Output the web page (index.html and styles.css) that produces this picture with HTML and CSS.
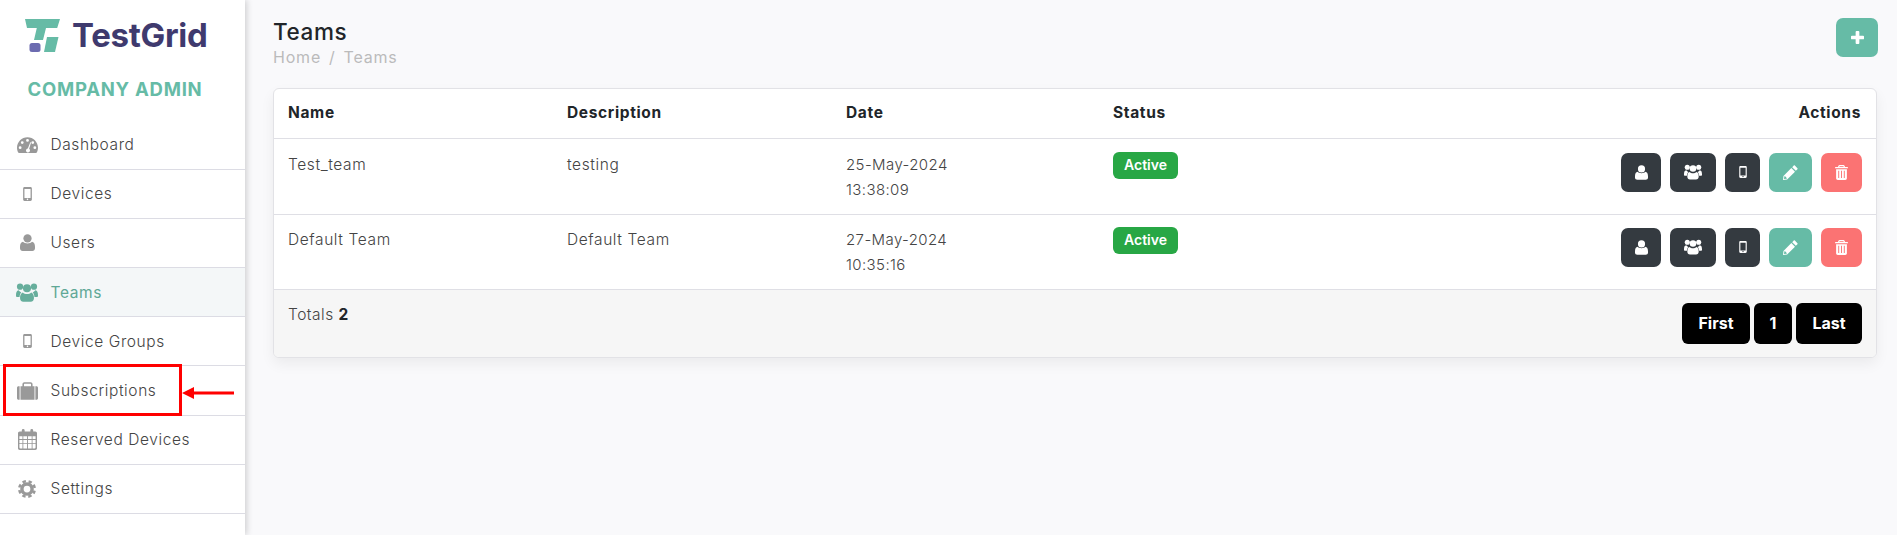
FILE: index.html
```html
<!DOCTYPE html>
<html lang="en">
<head>
<meta charset="utf-8">
<title>Teams</title>
<link rel="stylesheet" href="styles.css">
</head>
<body>
<svg class="defs" width="0" height="0" aria-hidden="true">
  <symbol id="i-dash" viewBox="0 0 24 18"><path fill-rule="evenodd" d="M12 0C5.400 0 0 5.400 0 12c0 2 .5 4 1.400 5.600.2.300.5.400.8.400h19.600c.3 0 .6-.1.8-.4C23.500 16 24 14 24 12 24 5.400 18.600 0 12 0zM12 2.200a1.600 1.600 0 1 1 0 3.200 1.600 1.600 0 0 1 0-3.200zM6 4.600a1.600 1.600 0 1 1 0 3.200 1.600 1.600 0 0 1 0-3.200zM3.600 10.400a1.600 1.600 0 1 1 0 3.200 1.600 1.600 0 0 1 0-3.200zM18 4.600a1.600 1.600 0 1 1 0 3.200 1.600 1.600 0 0 1 0-3.200zM20.400 10.400a1.600 1.600 0 1 1 0 3.200 1.600 1.600 0 0 1 0-3.200zM15.200 5.800l.9.3-2.200 7.300a2.300 2.300 0 1 1-1.500-.4z"/></symbol>
  <symbol id="i-mobile" viewBox="0 0 10 16"><path fill-rule="evenodd" d="M1.600 0h6.800C9.300 0 10 .7 10 1.600v12.800c0 .9-.7 1.600-1.600 1.600H1.600C.7 16 0 15.300 0 14.400V1.600C0 .7.7 0 1.600 0zM1.500 2.200v10.400h7V2.200zM5 13.200a.9.9 0 1 0 0 1.800.9.9 0 0 0 0-1.800z"/></symbol>
  <symbol id="i-user" viewBox="0 0 16 18"><circle cx="8" cy="4.600" r="4.400"/><path d="M3.200 8.200C4.400 9.400 6 10 8 10s3.600-.6 4.800-1.800c2 .4 3.200 2.300 3.200 5.300v1.700c0 1.700-1.200 2.800-2.800 2.800H2.800C1.200 18 0 16.900 0 15.200v-1.700c0-3 1.200-4.900 3.200-5.300z"/></symbol>
  <symbol id="i-users" viewBox="0 0 24 20"><circle cx="4.400" cy="3.600" r="3.400"/><circle cx="19.600" cy="3.600" r="3.400"/><circle cx="12" cy="5.400" r="4.400"/><path d="M3 7.600c.7 1.200 1.600 1.900 2.800 2.400C4.700 11 4 12.600 3.900 15H1.400C.5 15 0 14.400 0 13.500 0 10.200.5 7.900 3 7.600zM21 7.600c2.500.3 3 2.600 3 5.900 0 .9-.5 1.500-1.400 1.500h-2.500c-.1-2.400-.8-4-1.900-5 1.200-.5 2.100-1.200 2.800-2.400zM7.400 9.900c1.100 1.100 2.800 1.800 4.600 1.800s3.500-.7 4.600-1.800c2 .6 3 2.900 3 6 0 2.500-1.400 4.100-3.600 4.100H8c-2.200 0-3.600-1.600-3.600-4.100 0-3.100 1-5.400 3-6z"/></symbol>
  <symbol id="i-case" viewBox="0 0 24 20"><path fill-rule="evenodd" d="M3 4.500V20H1.800C.8 20 0 19.200 0 18.200V6.300c0-1 .8-1.800 1.800-1.800zM4 4.500h2.200V2.200C6.200 1 7.200 0 8.400 0h7.200c1.200 0 2.200 1 2.200 2.200v2.300H20V20H4zM8 4.500h8V2.200a.4.4 0 0 0-.4-.4H8.400a.4.4 0 0 0-.4.4zM21 4.500h1.200c1 0 1.800.8 1.800 1.800v11.900c0 1-.8 1.800-1.800 1.800H21z"/></symbol>
  <symbol id="i-cal" viewBox="0 0 20 22"><path fill-rule="evenodd" d="M1.800 2.500H4V1.500a1.500 1.500 0 0 1 3 0v1h6v-1a1.500 1.500 0 0 1 3 0v1h2.200c1 0 1.800.8 1.800 1.800v15.900c0 1-.8 1.800-1.800 1.800H1.800C.8 22 0 21.200 0 20.200V4.300c0-1 .8-1.800 1.800-1.800zM1.500 7.500v3h3.200v-3zM5.600 7.500v3h3.900v-3zM10.500 7.500v3h3.900v-3zM15.300 7.500v3h3.200v-3zM1.500 11.400v3.200h3.200v-3.200zM5.600 11.400v3.200h3.900v-3.200zM10.500 11.400v3.200h3.900v-3.200zM15.300 11.400v3.200h3.200v-3.200zM1.500 15.500v3.200c0 1 .2 1.800 1 1.800h2.200v-5zM5.600 15.500v5h3.900v-5zM10.500 15.500v5h3.900v-5zM15.300 15.500v5h2.200c.8 0 1-.8 1-1.800v-3.200z"/></symbol>
  <symbol id="i-cog" viewBox="0 0 24 24"><circle cx="12" cy="12" r="6.800" fill="none" stroke="currentColor" stroke-width="4.600"/><circle cx="12" cy="12" r="10.300" fill="none" stroke="currentColor" stroke-width="3.400" stroke-dasharray="4.600 3.490" stroke-dashoffset="2.300" transform="rotate(22.500 12 12)"/></symbol>
  <symbol id="i-plus" viewBox="0 0 14 14"><path d="M5 1a1 1 0 0 1 1-1h2a1 1 0 0 1 1 1v4h4a1 1 0 0 1 1 1v2a1 1 0 0 1-1 1H9v4a1 1 0 0 1-1 1H6a1 1 0 0 1-1-1V9H1a1 1 0 0 1-1-1V6a1 1 0 0 1 1-1h4z"/></symbol>
  <symbol id="i-pen" viewBox="0 0 16 16"><path fill-rule="evenodd" d="M11.500.6c.3-.3.8-.3 1.100 0l2.800 2.800c.3.300.3.800 0 1.100l-1.700 1.700-3.900-3.900zM8.900 3.200l3.900 3.900-8.400 8.400L0 16l.5-4.400zM2 11.800l-.6.6-.3 2.500 2.500-.3.600-.6z"/></symbol>
  <symbol id="i-trash" viewBox="0 0 14 16"><path fill-rule="evenodd" d="M5 0h4c.7 0 1.200.4 1.400 1l.4 1.200h2.500c.4 0 .7.300.7.700v.500H0v-.5c0-.4.300-.7.700-.7h2.500L3.600 1C3.800.4 4.300 0 5 0zM5 1.200l-.4 1h4.800l-.4-1zM1.200 4.500h11.600v9.700c0 1-.8 1.800-1.800 1.800H3c-1 0-1.800-.8-1.800-1.800zM3.500 6.200v7.600h1V6.200zM6.500 6.200v7.600h1V6.200zM9.500 6.200v7.600h1V6.200z"/></symbol>
</svg>
<div class="app">
  <aside class="sidebar">
    <div class="brand">
      <svg class="logo" viewBox="0 0 37 34" aria-hidden="true">
        <path class="logo-green" d="M1 1h35l-2.800 9H22l-3 12h-9l2.800-12H3z"/>
        <path class="logo-green" d="M23 19h11.500L31 34H20z"/>
        <rect class="logo-purple" x="5.500" y="25" width="11" height="9" rx="2.500"/>
      </svg>
      <span class="brand-name">TestGrid</span>
    </div>
    <div class="role">COMPANY ADMIN</div>
    <nav class="nav">
      <a class="nav-item"><span class="nav-icon"><svg class="ic-dash"><use href="#i-dash"/></svg></span>Dashboard</a>
      <a class="nav-item"><span class="nav-icon"><svg class="ic-mobile"><use href="#i-mobile"/></svg></span>Devices</a>
      <a class="nav-item"><span class="nav-icon"><svg class="ic-user"><use href="#i-user"/></svg></span>Users</a>
      <a class="nav-item active"><span class="nav-icon"><svg class="ic-users"><use href="#i-users"/></svg></span>Teams</a>
      <a class="nav-item"><span class="nav-icon"><svg class="ic-mobile"><use href="#i-mobile"/></svg></span>Device Groups</a>
      <a class="nav-item marked"><span class="nav-icon"><svg class="ic-case"><use href="#i-case"/></svg></span>Subscriptions
        <span class="mark-box"></span>
        <svg class="mark-arrow" viewBox="0 0 52 14" aria-hidden="true"><path d="M0 7l12-6v4.500h40v3H12V13z"/></svg>
      </a>
      <a class="nav-item"><span class="nav-icon"><svg class="ic-cal"><use href="#i-cal"/></svg></span>Reserved Devices</a>
      <a class="nav-item"><span class="nav-icon"><svg class="ic-cog"><use href="#i-cog"/></svg></span>Settings</a>
    </nav>
  </aside>
  <main class="main">
    <header class="page-head">
      <div>
        <h1 class="page-title">Teams</h1>
        <div class="crumbs"><span>Home</span><span>/</span><span>Teams</span></div>
      </div>
      <button class="btn btn-add"><svg class="ic-plus"><use href="#i-plus"/></svg></button>
    </header>
    <section class="card">
      <table class="table">
        <thead>
          <tr><th class="c-name">Name</th><th class="c-desc">Description</th><th class="c-date">Date</th><th class="c-status">Status</th><th class="c-actions">Actions</th></tr>
        </thead>
        <tbody>
          <tr>
            <td>Test_team</td><td>testing</td><td class="when">25-May-2024<br>13:38:09</td>
            <td><span class="badge">Active</span></td>
            <td class="c-actions"><div class="actions">
              <button class="btn dark w-user"><svg class="ic-b-user"><use href="#i-user"/></svg></button>
              <button class="btn dark w-users"><svg class="ic-b-users"><use href="#i-users"/></svg></button>
              <button class="btn dark w-mobile"><svg class="ic-b-mobile"><use href="#i-mobile"/></svg></button>
              <button class="btn green w-pen"><svg class="ic-b-pen"><use href="#i-pen"/></svg></button>
              <button class="btn red w-trash"><svg class="ic-b-trash"><use href="#i-trash"/></svg></button>
            </div></td>
          </tr>
          <tr>
            <td>Default Team</td><td>Default Team</td><td class="when">27-May-2024<br>10:35:16</td>
            <td><span class="badge">Active</span></td>
            <td class="c-actions"><div class="actions">
              <button class="btn dark w-user"><svg class="ic-b-user"><use href="#i-user"/></svg></button>
              <button class="btn dark w-users"><svg class="ic-b-users"><use href="#i-users"/></svg></button>
              <button class="btn dark w-mobile"><svg class="ic-b-mobile"><use href="#i-mobile"/></svg></button>
              <button class="btn green w-pen"><svg class="ic-b-pen"><use href="#i-pen"/></svg></button>
              <button class="btn red w-trash"><svg class="ic-b-trash"><use href="#i-trash"/></svg></button>
            </div></td>
          </tr>
        </tbody>
      </table>
      <footer class="card-foot">
        <div class="totals">Totals <b>2</b></div>
        <div class="pager"><button class="page-btn w-first">First</button><button class="page-btn w-one">1</button><button class="page-btn w-last">Last</button></div>
      </footer>
    </section>
  </main>
</div>
</body>
</html>
```

FILE: styles.css
```css
* { box-sizing: border-box; }
html, body { margin: 0; height: 100%; }
body { font-family: "Inter", "Liberation Sans", sans-serif; font-size: 15px; color: #555; background: #f9f9fb; overflow: hidden; }
.defs { position: absolute; }
svg { fill: currentColor; display: block; }
.app { display: flex; height: 535px; }

.sidebar { width: 245px; flex: none; background: #fff; box-shadow: 2px 0 6px rgba(0,0,0,.16); }
.brand { display: flex; align-items: center; gap: 11px; height: 34px; margin: 18px 0 0 24px; }
.logo { width: 37px; height: 34px; }
.logo-green { fill: #66bba6; }
.logo-purple { fill: #6c6bb0; }
.brand-name { font-size: 33px; font-weight: 700; color: #3f3a6e; letter-spacing: -.3px; }
.role { margin-top: 26px; text-align: center; font-size: 18.500px; line-height: 22px; font-weight: 700; color: #66bba6; letter-spacing: .75px; padding-right: 15px; }
.nav { margin-top: 20.500px; }
.nav-item { display: flex; align-items: center; height: 49.200px; padding-left: 16px; border-bottom: 1px solid #dcdce4; color: #444; font-size: 15.500px; font-weight: 300; letter-spacing: .6px; }
.nav-item.active { background: #f4f7f8; color: #5fa896; font-weight: 400; }
.nav-item.active .nav-icon { color: #66ae9c; }
.nav-icon { width: 22px; margin-right: 12.500px; display: flex; justify-content: center; color: #999; }
.ic-dash { width: 21px; height: 16px; }
.ic-mobile { width: 9px; height: 14px; }
.ic-user { width: 15px; height: 17px; }
.ic-users { width: 22px; height: 19px; }
.ic-case { width: 21px; height: 18px; }
.ic-cal { width: 19px; height: 21px; }
.ic-cog { width: 18px; height: 18px; }
.marked { position: relative; }
.mark-box { position: absolute; left: 3px; top: -2px; width: 179px; height: 52px; border: 3px solid #f00; }
.mark-arrow { position: absolute; left: 182px; top: 20px; width: 52px; height: 14px; fill: #f00; }

.main { flex: 1; min-width: 0; padding: 18px 20px 0 28px; }
.page-head { display: flex; justify-content: space-between; align-items: flex-start; height: 70px; }
.page-title { margin: 0; font-size: 22.500px; line-height: 27px; font-weight: 500; color: #212529; letter-spacing: .6px; }
.crumbs { display: flex; gap: 8px; font-size: 16px; line-height: 20px; color: #bbb; letter-spacing: .8px; margin-top: 2px; }

.btn { border: 0; padding: 0; display: flex; align-items: center; justify-content: center; height: 39px; border-radius: 7px; color: #fff; }
.btn-add { width: 42px; background: #66bba6; margin-right: -1px; }
.ic-plus { width: 13px; height: 13px; }
.dark { background: #343a40; }
.green { background: #66bba6; }
.red { background: #fb7373; }
.w-user { width: 40px; }
.w-users { width: 46px; }
.w-mobile { width: 35px; }
.w-pen { width: 43px; }
.w-trash { width: 41px; }
.ic-b-user { width: 13px; height: 15px; }
.ic-b-users { width: 18px; height: 16px; }
.ic-b-mobile { width: 8px; height: 12px; }
.ic-b-pen { width: 15px; height: 15px; }
.ic-b-trash { width: 13px; height: 15px; }

.card { background: #fff; border: 1px solid #e2e2e6; border-radius: 6px; box-shadow: 0 6px 14px rgba(0,0,0,.06); overflow: hidden; width: 1604px; }
.table { width: 100%; border-collapse: collapse; table-layout: fixed; }
.table th { height: 49px; text-align: left; padding: 0 15px 2px 14px; font-size: 15.500px; font-weight: 700; color: #212529; letter-spacing: .65px; border-bottom: 1px solid #dfdfe5; }
.table td { vertical-align: top; padding: 13px 14px 0; height: 76px; font-size: 15.500px; line-height: 25px; color: #444; letter-spacing: .6px; border-bottom: 1px solid #dfdfe5; font-weight: 300; }
.table tr + tr td { height: 75px; padding-top: 12px; }
.table td.when { font-size: 15px; letter-spacing: .4px; }
.table tr td.c-actions { padding-right: 14px; }
.c-name { width: 279px; }
.c-desc { width: 279px; }
.c-date { width: 267px; }
.c-status { width: 200px; }
.table th.c-actions { text-align: right; }
.actions { display: flex; justify-content: flex-end; gap: 9px; margin-top: 1px; }
.badge { display: inline-flex; align-items: center; justify-content: center; width: 65px; height: 27px; background: #28a745; border-radius: 6px; color: #fff; font-size: 14px; font-weight: 600; line-height: 1; letter-spacing: 0; }
.card-foot { display: flex; justify-content: space-between; background: #f6f6f6; height: 67px; padding: 13px 14px 0 14px; }
.totals { font-size: 15.500px; line-height: 24px; letter-spacing: .5px; color: #444; font-weight: 300; }
.totals b { color: #212529; font-weight: 700; }
.pager { display: flex; gap: 4px; }
.page-btn { border: 0; height: 41px; border-radius: 6px; background: #000; color: #fff; font: 700 16px "Inter", "Liberation Sans", sans-serif; }
.w-first { width: 68px; }
.w-one { width: 38px; }
.w-last { width: 66px; }
```
